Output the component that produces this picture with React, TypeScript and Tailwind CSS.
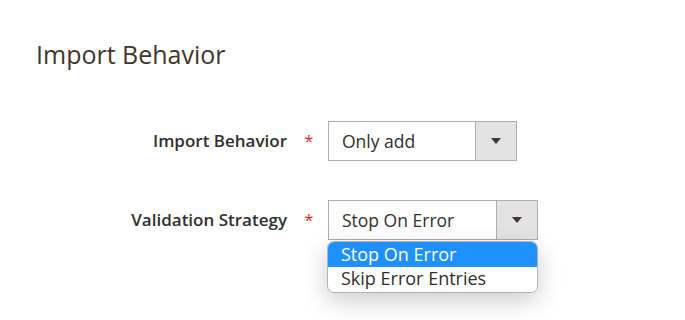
import React from "react";

function Arrow() {
  return (
    <svg width="10" height="6" viewBox="0 0 10 6" className="block">
      <path d="M0 0 H10 L5 6 Z" fill="#41362f" />
    </svg>
  );
}

function Select({ value, width, open }: { value: string; width: number; open?: boolean }) {
  return (
    <div className="relative">
      <div
        className={
          "flex h-[40px] border border-[#adadad] bg-white " +
          (width === 189 ? "w-[189px]" : "w-[210px]")
        }
      >
        <div className="flex-1 pl-[13px] flex items-center text-[17.5px] text-[#303030]">{value}</div>
        <div className="w-[41px] border-l border-[#adadad] bg-[#e3e3e3] flex items-center justify-center">
          <Arrow />
        </div>
      </div>
      {open && (
        <div className="absolute left-[-1px] top-[41px] w-[211px] bg-white rounded-[7px] border border-[#b4b4b4] shadow-[0_8px_24px_rgba(0,0,0,0.2)] overflow-hidden pb-[3px] text-[18px]">
          <div className="h-[25px] bg-[#1e90ff] text-white pl-[13px] flex items-center">Stop On Error</div>
          <div className="h-[22px] text-[#303030] pl-[13px] flex items-center">Skip Error Entries</div>
        </div>
      )}
    </div>
  );
}

function Row({ label, children }: { label: string; children: React.ReactNode }) {
  return (
    <div className="flex items-center">
      <div className="w-[287px] text-right font-semibold text-[17px] text-[#303030]">{label}</div>
      <div className="w-[41px] text-center text-[#e22626] text-[16px] pl-[3px]">*</div>
      {children}
    </div>
  );
}

export default function App() {
  return (
    <div
      className="w-[685px] h-[320px] bg-white overflow-hidden"
      style={{ fontFamily: '"Open Sans", sans-serif' }}
    >
      <div className="pl-[36px] pt-[38px] text-[25px] leading-[32px] text-[#41362f]">Import Behavior</div>
      <div className="mt-[51px] flex flex-col gap-[39px]">
        <Row label="Import Behavior">
          <Select value="Only add" width={189} />
        </Row>
        <Row label="Validation Strategy">
          <Select value="Stop On Error" width={210} open />
        </Row>
      </div>
    </div>
  );
}
